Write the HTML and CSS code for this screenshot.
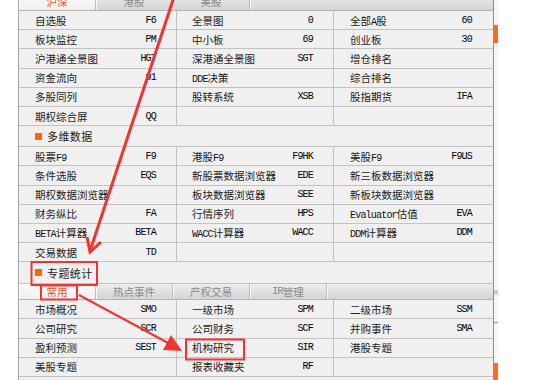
FILE: index.html
```html
<!DOCTYPE html>
<html lang="zh-CN">
<head>
<meta charset="utf-8">
<title>功能菜单</title>
<link rel="stylesheet" href="styles.css">
</head>
<body>
<div class="screen">
  <div class="panel">
    <div class="tabs top">
      <div class="tab active">沪深</div>
      <div class="tab">港股</div>
      <div class="tab">美股</div>
      <div class="tab fill"></div>
    </div>
    <div class="grid">
      <div class="cell"><span>自选股</span><span class="code">F6</span></div>
      <div class="cell"><span>全景图</span><span class="code">0</span></div>
      <div class="cell"><span>全部<span class="lat">A</span>股</span><span class="code">60</span></div>

      <div class="cell"><span>板块监控</span><span class="code">PM</span></div>
      <div class="cell"><span>中小板</span><span class="code">69</span></div>
      <div class="cell"><span>创业板</span><span class="code">30</span></div>

      <div class="cell"><span>沪港通全景图</span><span class="code">HGT</span></div>
      <div class="cell"><span>深港通全景图</span><span class="code">SGT</span></div>
      <div class="cell"><span>增仓排名</span></div>

      <div class="cell"><span>资金流向</span><span class="code">91</span></div>
      <div class="cell"><span><span class="lat">DDE</span>决策</span></div>
      <div class="cell"><span>综合排名</span></div>

      <div class="cell"><span>多股同列</span></div>
      <div class="cell"><span>股转系统</span><span class="code">XSB</span></div>
      <div class="cell"><span>股指期货</span><span class="code">IFA</span></div>

      <div class="cell"><span>期权综合屏</span><span class="code">QQ</span></div>
      <div class="cell"></div>
      <div class="cell"></div>
    </div>
    <div class="section s1"><span class="sq"></span><span>多维数据</span></div>
    <div class="grid">
      <div class="cell"><span>股票<span class="lat">F9</span></span><span class="code">F9</span></div>
      <div class="cell"><span>港股<span class="lat">F9</span></span><span class="code">F9HK</span></div>
      <div class="cell"><span>美股<span class="lat">F9</span></span><span class="code">F9US</span></div>

      <div class="cell"><span>条件选股</span><span class="code">EQS</span></div>
      <div class="cell"><span>新股票数据浏览器</span><span class="code">EDE</span></div>
      <div class="cell"><span>新三板数据浏览器</span></div>

      <div class="cell"><span>期权数据浏览器</span></div>
      <div class="cell"><span>板块数据浏览器</span><span class="code">SEE</span></div>
      <div class="cell"><span>新板块数据浏览器</span></div>

      <div class="cell"><span>财务纵比</span><span class="code">FA</span></div>
      <div class="cell"><span>行情序列</span><span class="code">HPS</span></div>
      <div class="cell"><span><span class="lat">Evaluator</span>估值</span><span class="code">EVA</span></div>

      <div class="cell"><span><span class="lat">BETA</span>计算器</span><span class="code">BETA</span></div>
      <div class="cell"><span><span class="lat">WACC</span>计算器</span><span class="code">WACC</span></div>
      <div class="cell"><span><span class="lat">DDM</span>计算器</span><span class="code">DDM</span></div>

      <div class="cell"><span>交易数据</span><span class="code">TD</span></div>
      <div class="cell"></div>
      <div class="cell"></div>
    </div>
    <div class="section s2"><span class="sq"></span><span>专题统计</span></div>
    <div class="tabs sub">
      <div class="tab active">常用</div>
      <div class="tab">热点事件</div>
      <div class="tab">产权交易</div>
      <div class="tab"><span class="lat">IR</span>管理</div>
      <div class="tab fill"></div>
    </div>
    <div class="grid">
      <div class="cell"><span>市场概况</span><span class="code">SMO</span></div>
      <div class="cell"><span>一级市场</span><span class="code">SPM</span></div>
      <div class="cell"><span>二级市场</span><span class="code">SSM</span></div>

      <div class="cell"><span>公司研究</span><span class="code">SCR</span></div>
      <div class="cell"><span>公司财务</span><span class="code">SCF</span></div>
      <div class="cell"><span>并购事件</span><span class="code">SMA</span></div>

      <div class="cell"><span>盈利预测</span><span class="code">SEST</span></div>
      <div class="cell"><span>机构研究</span><span class="code">SIR</span></div>
      <div class="cell"><span>港股专题</span></div>

      <div class="cell"><span>美股专题</span></div>
      <div class="cell"><span>报表收藏夹</span><span class="code">RF</span></div>
      <div class="cell"></div>
    </div>
  </div>
  <div class="strip">
    <div class="seg s-a"></div>
    <div class="seg s-orange1"></div>
    <div class="seg s-b"></div>
    <div class="seg s-band"></div>
    <div class="seg s-c"></div>
    <div class="seg s-line"></div>
    <div class="seg s-d"></div>
    <div class="seg s-orange2"></div>
  </div>
  <svg class="annot" width="550" height="380" viewBox="0 0 550 380">
    <g fill="none" stroke="#ef3434" stroke-width="2">
      <rect x="31.5" y="262" width="65.5" height="23"/>
      <rect x="41" y="285.5" width="36" height="14"/>
      <rect x="186" y="339.5" width="58" height="20"/>
    </g>
    <line x1="174" y1="-3" x2="90" y2="251" stroke="#ef3434" stroke-width="3"/>
    <polyline points="87,237 90,252 101,242" fill="none" stroke="#ef3434" stroke-width="3"/>
    <line x1="79" y1="295" x2="170" y2="344" stroke="#ef3434" stroke-width="2"/>
    <polygon points="182,351 163,350 171,335" fill="#ef3434"/>
  </svg>
</div>
</body>
</html>
```
FILE: styles.css
```css
* { box-sizing: border-box; margin: 0; padding: 0; }
html, body { width: 550px; height: 380px; overflow: hidden; background: #ffffff; }
body {
  font-family: "Noto Sans CJK SC", "Liberation Sans", sans-serif;
  font-size: 10.5px;
  color: #222222;
}
.screen {
  position: relative;
  display: flex;
  height: 380px;
  padding-left: 18px;
}
.panel {
  width: 476px;
  height: 380px;
  border-left: 1px solid #a9a9a9;
  border-right: 1px solid #8f8f8f;
  background: #f0f0f0;
  display: flex;
  flex-direction: column;
  overflow: hidden;
}
.tabs {
  display: grid;
  grid-template-columns: 77px 77px 77px 77px 1fr;
  border-bottom: 1px solid #b4b4b4;
  flex: none;
}
.tabs.top {
  height: 18px;
  margin-top: -7px;
  grid-template-columns: 77px 77px 77px 1fr;
}
.tabs.sub {
  height: 16px;
}
.tab {
  display: flex;
  align-items: center;
  justify-content: center;
  background: linear-gradient(#ededed, #d3d3d3);
  border-right: 1px solid #bdbdbd;
  box-shadow: inset 1px 0 0 #f8f8f8;
  color: #8a8a8a;
}
.tab.fill { border-right: 0; }
.tab.active {
  background: linear-gradient(#fbfbfb, #efefef);
  color: #e8561c;
}
.grid {
  display: grid;
  grid-template-columns: 158px 157px 159px;
  grid-auto-rows: 19.2px;
  flex: none;
}
.cell {
  display: flex;
  align-items: center;
  justify-content: space-between;
  padding: 0 20px 0 16px;
  border-bottom: 1px solid #c2c2c2;
  border-right: 1px solid #c2c2c2;
  white-space: nowrap;
}
.cell:nth-child(3n+2) { padding-left: 15px; }
.cell:nth-child(3n) { border-right: 0; padding-right: 21px; }
.code {
  font-family: "Liberation Mono", monospace;
  font-size: 10px;
  letter-spacing: -0.8px;
  color: #000000;
}
.lat {
  font-family: "Liberation Mono", monospace;
  font-size: 10px;
  letter-spacing: -0.8px;
  color: #111111;
}
.tab .lat { color: inherit; }
.section {
  display: flex;
  align-items: center;
  gap: 5px;
  padding-left: 16px;
  border-bottom: 1px solid #c2c2c2;
  font-size: 11px;
  letter-spacing: 0.4px;
  color: #222222;
  flex: none;
}
.section.s1 { height: 21px; }
.section.s2 { height: 22px; }
.sq {
  width: 7px;
  height: 7px;
  background: #ff6600;
}
.strip {
  width: 4px;
  height: 380px;
  display: flex;
  flex-direction: column;
  background: #f4f6fb;
}
.seg { flex: none; }
.s-a { height: 25px; }
.s-orange1 { height: 18px; background: #ff6a1e; }
.s-b { height: 247px; }
.s-band { height: 5px; background: #cfcfcf; }
.s-c { height: 27px; }
.s-line { height: 1px; background: #8a8a8a; }
.s-d { height: 40px; }
.s-orange2 { height: 17px; background: #ff6a1e; }
.annot {
  position: absolute;
  top: 0;
  left: 0;
  pointer-events: none;
}
```
